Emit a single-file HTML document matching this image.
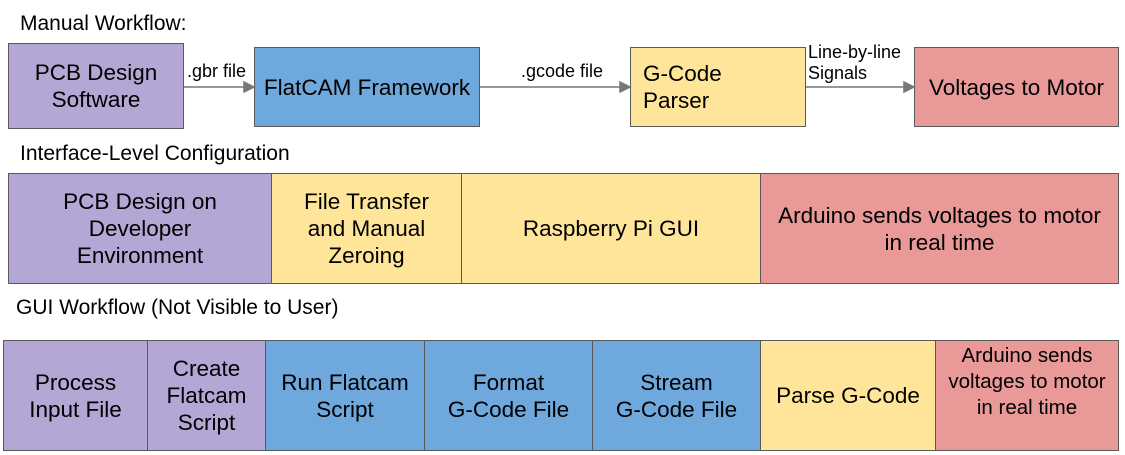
<!DOCTYPE html>
<html><head><style>
body{margin:0;width:1125px;height:455px;background:#fff;position:relative;font-family:"Liberation Sans",Arial,sans-serif;overflow:hidden}
.b{position:absolute;box-sizing:border-box;border:1.5px solid #595959;display:flex;align-items:center;justify-content:center;text-align:center;font-size:22.5px;line-height:27px;color:#000}
.p{background:#b4a7d6}.bl{background:#6fa8dc}.y{background:#ffe599}.r{background:#ea9999}
.t{position:absolute;font-size:21px;color:#000;white-space:nowrap}
.s{position:absolute;font-size:18px;color:#000;white-space:nowrap;line-height:21px}
</style></head><body>
<div class="t" style="left:20px;top:12px">Manual Workflow:</div>
<div class="b p" style="left:8px;top:43px;width:176px;height:86px">PCB Design<br>Software</div>
<div class="b bl" style="left:254px;top:47px;width:226px;height:80px">FlatCAM Framework</div>
<div class="b y" style="left:630px;top:47px;width:176px;height:80px;justify-content:flex-start;padding-left:12px;text-align:left">G-Code<br>Parser</div>
<div class="b r" style="left:914px;top:47px;width:205px;height:80px">Voltages to Motor</div>
<svg style="position:absolute;left:0;top:0" width="1125" height="455">
<g stroke="#777" stroke-width="1.5" fill="#777">
<line x1="184" y1="87" x2="244" y2="87"/><polygon points="244,82 254,87 244,92"/>
<line x1="480" y1="87" x2="620" y2="87"/><polygon points="620,82 630,87 620,92"/>
<line x1="806" y1="87" x2="904" y2="87"/><polygon points="904,82 914,87 904,92"/>
</g></svg>
<div class="s" style="left:187px;top:61px">.gbr file</div>
<div class="s" style="left:521px;top:61px">.gcode file</div>
<div class="s" style="left:808px;top:42px">Line-by-line<br>Signals</div>
<div class="t" style="left:20px;top:142px">Interface-Level Configuration</div>
<div class="b p" style="left:8px;top:173px;width:264px;height:111px">PCB Design on<br>Developer<br>Environment</div>
<div class="b y" style="left:271px;top:173px;width:191px;height:111px">File Transfer<br>and Manual<br>Zeroing</div>
<div class="b y" style="left:461px;top:173px;width:300px;height:111px">Raspberry Pi GUI</div>
<div class="b r" style="left:760px;top:173px;width:359px;height:111px">Arduino sends voltages to motor<br>in real time</div>
<div class="t" style="left:16px;top:296px">GUI Workflow (Not Visible to User)</div>
<div class="b p" style="left:3px;top:340px;width:145px;height:111px">Process<br>Input File</div>
<div class="b p" style="left:147px;top:340px;width:119px;height:111px">Create<br>Flatcam<br>Script</div>
<div class="b bl" style="left:265px;top:340px;width:160px;height:111px">Run Flatcam<br>Script</div>
<div class="b bl" style="left:424px;top:340px;width:169px;height:111px">Format<br>G-Code File</div>
<div class="b bl" style="left:592px;top:340px;width:169px;height:111px">Stream<br>G-Code File</div>
<div class="b y" style="left:760px;top:340px;width:176px;height:111px">Parse G-Code</div>
<div class="b r" style="left:935px;top:340px;width:184px;height:111px;font-size:20.5px;line-height:26px;align-items:flex-start;padding-top:2px">Arduino sends<br>voltages to motor<br>in real time</div>
</body></html>
